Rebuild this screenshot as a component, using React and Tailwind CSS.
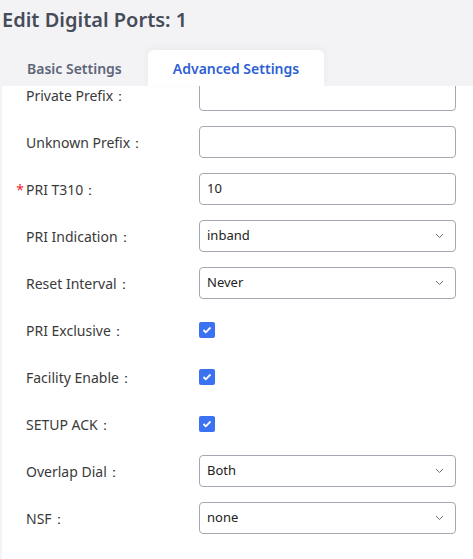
import { useState } from 'react';

const font = { fontFamily: '"Noto Sans", "Open Sans", sans-serif' };

const Chevron = () => (
  <svg width="9" height="6" viewBox="0 0 9 6" className="text-gray-500">
    <path d="M1 1l3.5 3.5L8 1" fill="none" stroke="currentColor" strokeWidth="1" />
  </svg>
);

const Check = () => (
  <span className="flex h-4 w-4 items-center justify-center rounded-[2px] bg-[#3b72f2]">
    <svg width="10" height="8" viewBox="0 0 10 8">
      <path d="M1.5 4l2.3 2.3L8.5 1.5" fill="none" stroke="white" strokeWidth="1.8" />
    </svg>
  </span>
);

const rows = [
  { label: 'Private Prefix', type: 'input', value: '' },
  { label: 'Unknown Prefix', type: 'input', value: '' },
  { label: 'PRI T310', type: 'input', value: '10', required: true },
  { label: 'PRI Indication', type: 'select', value: 'inband' },
  { label: 'Reset Interval', type: 'select', value: 'Never' },
  { label: 'PRI Exclusive', type: 'check' },
  { label: 'Facility Enable', type: 'check' },
  { label: 'SETUP ACK', type: 'check' },
  { label: 'Overlap Dial', type: 'select', value: 'Both' },
  { label: 'NSF', type: 'select', value: 'none' },
];

const Field = ({ row }) => {
  if (row.type === 'check') return <Check />;
  return (
    <div className="flex h-8 w-[257px] items-center justify-between rounded-[4px] border border-[#a3a8b1] bg-white pl-[7px] pr-[11px] text-[13px] text-[#222]">
      <span>{row.value}</span>
      {row.type === 'select' && <Chevron />}
    </div>
  );
};

export default function App() {
  const [tab] = useState('advanced');

  return (
    <div className="h-[559px] w-[473px] overflow-hidden bg-[#f3f3f5]" style={font}>
      <h1 className="pl-[2px] pt-[7px] text-[20px] font-semibold leading-[26px] text-[#474c59]">Edit Digital Ports: 1</h1>

      <div className="mt-[17px] flex h-9 items-end">
        <div className="flex h-9 w-[148px] items-center pl-[27px] text-[14px] font-semibold text-[#5d6678]">Basic Settings</div>
        <div
          className={`flex h-9 w-[176px] items-center justify-center rounded-t-[6px] text-[14px] font-semibold ${
            tab === 'advanced' ? 'bg-white text-[#2d5fd3] shadow-[0_-2px_8px_rgba(0,0,0,0.04)]' : ''
          }`}
        >
          Advanced Settings
        </div>
      </div>

      <div className="ml-[2px] h-[473px] overflow-hidden bg-white">
        <div className="-mt-[7px] flex flex-col gap-[15px]">
          {rows.map((row) => (
            <div key={row.label} className="flex h-8 items-center">
              <div className="flex w-[197px] items-center text-[14px] text-[#3a3a3a]">
                <span className="w-[24px] pr-[2px] text-right text-[#f5222d]">{row.required ? '*' : ''}</span>
                <span>{row.label}：</span>
              </div>
              <Field row={row} />
            </div>
          ))}
        </div>
      </div>
    </div>
  );
}
